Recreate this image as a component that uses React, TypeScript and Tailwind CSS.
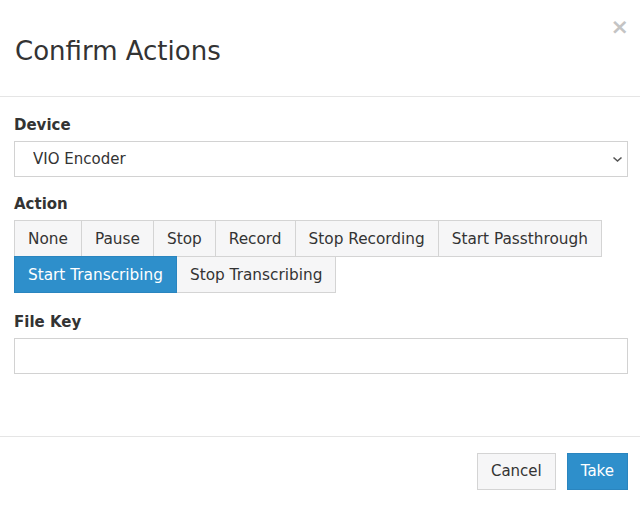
import React, { useState } from 'react';

const ROWS = [
  ['None', 'Pause', 'Stop', 'Record', 'Stop Recording', 'Start Passthrough'],
  ['Start Transcribing', 'Stop Transcribing'],
];

export default function App() {
  const [action, setAction] = useState('Start Transcribing');

  return (
    <div className="w-[640px] h-[506px] bg-white text-[#333] font-['DejaVu_Sans',sans-serif] flex flex-col">
      {/* Header */}
      <div className="relative h-[97px] border-b border-[#e5e5e5] pl-[15px] flex items-center">
        <h2 className="text-[26px] leading-[36px] font-normal mt-[6px]">Confirm Actions</h2>
        <button className="absolute right-[11px] top-[16px] text-[22px] font-bold leading-none text-[#c4c4c4]">×</button>
      </div>

      {/* Body */}
      <div className="flex-1 pl-[14px] pr-[12px] pt-[18px]">
        <label className="block text-[15px] font-bold leading-5 mb-[6px]">Device</label>
        <div className="relative">
          <select className="w-full h-[36px] appearance-none border border-[#d2d2d2] bg-white pl-[18px] text-[15px] text-[#333] outline-none">
            <option>VIO Encoder</option>
          </select>
          <svg className="absolute right-[5px] top-[15px] pointer-events-none" width="11" height="7" viewBox="0 0 11 7">
            <path d="M1.5 1.5 L5.5 5 L9.5 1.5" fill="none" stroke="#555" strokeWidth="1.6" />
          </svg>
        </div>

        <label className="block text-[15px] font-bold leading-5 mt-[17px] mb-[6px]">Action</label>
        <div className="flex flex-col">
          {ROWS.map((row, i) => (
            <div key={i} className="flex">
              {row.map((name, j) => {
                const active = name === action;
                return (
                  <button
                    key={name}
                    onClick={() => setAction(name)}
                    className={
                      'h-[37px] px-[13px] text-[15.3px] leading-5 border ' +
                      (j > 0 ? '-ml-px ' : '') +
                      (i > 0 ? '-mt-px ' : '') +
                      (active
                        ? 'bg-[#2e8fcb] border-[#2a85bf] text-white relative z-10'
                        : 'bg-[#f6f6f7] border-[#d4d4d4] text-[#333]')
                    }
                  >
                    {name}
                  </button>
                );
              })}
            </div>
          ))}
        </div>

        <label className="block text-[15px] font-bold leading-5 mt-[19px] mb-[6px]">File Key</label>
        <input className="w-full h-[36px] border border-[#d2d2d2] px-3 text-[15px] outline-none" />
      </div>

      {/* Footer */}
      <div className="h-[70px] border-t border-[#e5e5e5] pr-[12px] pt-[16px] flex justify-end items-start gap-[11px]">
        <button className="h-[37px] px-[13px] text-[15px] border border-[#d4d4d4] bg-[#f6f6f7] text-[#333]">Cancel</button>
        <button className="h-[37px] px-[13px] text-[15px] border border-[#2a85bf] bg-[#2e8fcb] text-white">Take</button>
      </div>
    </div>
  );
}
